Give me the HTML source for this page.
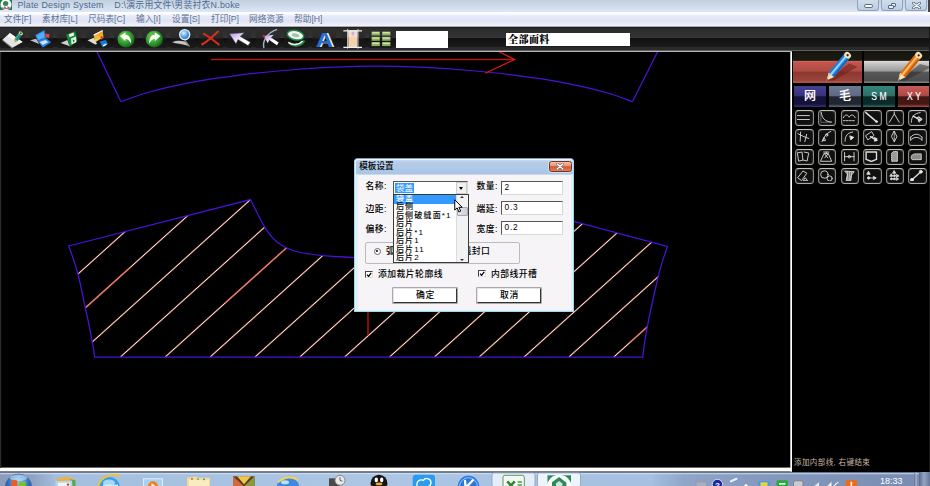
<!DOCTYPE html>
<html><head><meta charset="utf-8"><title>Plate Design System</title>
<style>
html,body{margin:0;padding:0;background:#000;}
#root{position:relative;width:930px;height:486px;overflow:hidden;background:#000;font-family:"Liberation Sans","Noto Sans CJK SC",sans-serif;}
#root div,#root span,#root svg{position:absolute;box-sizing:border-box;}
#titlebar{left:0;top:0;width:930px;height:12px;background:linear-gradient(#c3cfde 0%,#ccd9e9 40%,#d6e2f2 80%,#dde8f6 100%);}
#title{left:17.5px;top:-1px;font-size:8.9px;line-height:13px;color:#4d6a8c;white-space:nowrap;letter-spacing:.2px;}
#menubar{left:0;top:12px;width:930px;height:15px;background:linear-gradient(#fff 0%,#fdfdff 12%,#e8ecf9 26%,#dfe3f4 58%,#eaebf7 78%,#f2f2fa 91%,#b8b8c0 96%,#555 100%);}
  .mi{top:1px;font-size:8.7px;line-height:12px;color:#5d7395;white-space:nowrap;}
#toolbar{left:0;top:27px;width:930px;height:25.3px;background:linear-gradient(#202020 0%,#222 5%,#2c2c2c 7%,#333 41%,#3c3c3c 43%,#101010 46%,#1c1c1c 78%,#2a2a2a 81%,#2a2a2a 93%,#b0b0b0 95.5%,#b8b8b8 100%);}
.wb{top:0;height:11px;border:1px solid #8fa3bf;border-top:none;border-radius:0 0 3px 3px;background:linear-gradient(#cfdcec,#bccde2);}
#canvas{left:0;top:52px;width:793px;height:420px;background:#000;}
#panel{left:792px;top:51px;width:138px;height:421px;background:#000;}
#taskbar{left:0;top:471.7px;width:930px;height:15px;background:linear-gradient(90deg,#8a9cba 0%,#8fa2c2 3.5%,#a4bede 6%,#acc6e4 40%,#a5c0e0 70%,#8fa6c8 73.5%,#8499bd 82%,#788cb2 100%);}
.tab{top:35px;height:21px;color:#fff;font-size:12px;line-height:21px;text-align:center;font-weight:500;text-shadow:0 0 .8px #fff6;}
.ib{width:18.6px;height:16.3px;border:1.7px solid;border-color:#c4c0ba #8e8a84 #b0aca6 #8e8a84;border-radius:3.8px;background:#101010;box-shadow:inset 0 0 1.2px #fff9, 0 0 .8px #8888;}
#dlg{left:354px;top:157.6px;width:220.3px;height:154.4px;background:#e2f0f9;border:1px solid #9ed8ee;border-top-color:#7f9bb8;border-radius:4px 4px 1px 1px;}
#dlg .tbar{left:0;top:0;width:100%;height:15.2px;background:linear-gradient(#cfe0f4 0,#b6cde9 22%,#a9c5e5 100%);border-radius:3px 3px 0 0;box-shadow:inset 0 1px 0 #f0f7ff, inset 1px 0 0 #e4f0fa;}
#dlg .client{left:2.4px;top:15px;width:215px;height:137px;background:#f6f4f6;border:1px solid #e6eef5;border-top-color:#c9d9ea;}
.lbl{font-size:8.8px;line-height:11px;color:#000;white-space:nowrap;font-weight:500;letter-spacing:.5px;}
.inp{height:14px;width:62px;background:#fff;border:1px solid #d8d8d8;border-top-color:#555;border-left-color:#555;font-size:8.3px;line-height:11px;padding-left:2px;letter-spacing:.9px;color:#000;}
.btn{height:15px;width:64px;background:#fff;border:1px solid #333;border-top-color:#e4e4e4;border-left-color:#e4e4e4;box-shadow:0 0 0 .6px #777;font-size:8.8px;letter-spacing:.5px;line-height:12.5px;text-align:center;color:#000;font-weight:500;}
.li{left:0;width:64px;height:8.6px;font-size:8.1px;line-height:8.6px;color:#000;white-space:nowrap;padding-left:2px;font-weight:500;letter-spacing:1.1px;}
.cb{width:8px;height:7.6px;border:1px solid #e0e0e0;border-top-color:#444;border-left-color:#444;background:#fff;}
</style></head><body>
<div id="root">
  <div id="titlebar">
    <svg width="13" height="12" viewBox="0 0 13 12" style="left:0;top:0"><rect x="0" y="0" width="12" height="10" fill="#1f7c4c"/><circle cx="6" cy="4.6" r="5.5" fill="#fbfdfb"/><ellipse cx="5.6" cy="3.4" rx="2.7" ry="2.5" fill="#2c8a58"/><path d="M1.4 6.6 C3 8 4 8 5 6.6 C6 8.4 7.4 8.4 8.4 6.4 C9.4 8 10.4 7.4 11 6.2 L10 9 L2.4 9 Z" fill="#e0609a"/><path d="M4.6 6.4 L5.4 8.6 M7.8 6.4 L8.4 8.6" stroke="#2c8a58" stroke-width=".9"/></svg>
    <span id="title">Plate Design System&nbsp;&nbsp;&nbsp;&nbsp;D:\演示用文件\男装衬衣N.boke</span>
    <div class="wb" style="left:857px;width:22px"><div style="left:6.3px;top:4.3px;width:8.6px;height:3.8px;border:1px solid #5a6a80;border-radius:1.9px;background:#fff"></div></div>
    <div class="wb" style="left:881px;width:22px"><div style="left:8.5px;top:2.5px;width:5.5px;height:4.5px;border:1.3px solid #5a6a80;border-radius:1px;background:#e8eef6"></div><div style="left:6px;top:4.5px;width:5.5px;height:4.5px;border:1.3px solid #5a6a80;border-radius:1px;background:#e8eef6"></div></div>
    <div class="wb" style="left:905px;width:22px"><svg width="9" height="7" viewBox="0 0 9 7" style="left:5.8px;top:2.2px"><path d="M1.4 1.2 L7.6 5.8 M7.6 1.2 L1.4 5.8" stroke="#5a6a80" stroke-width="2.8" stroke-linecap="round"/><path d="M1.4 1.2 L7.6 5.8 M7.6 1.2 L1.4 5.8" stroke="#fff" stroke-width="1.3" stroke-linecap="round"/></svg></div>
    <div style="left:928px;top:0;width:2px;height:26px;background:#444"></div>
  </div>
  <div id="menubar">
    <span class="mi" style="left:4px">文件[F]</span>
    <span class="mi" style="left:42px">素材库[L]</span>
    <span class="mi" style="left:88px">尺码表[C]</span>
    <span class="mi" style="left:136px">输入[I]</span>
    <span class="mi" style="left:172px">设置[S]</span>
    <span class="mi" style="left:211px">打印[P]</span>
    <span class="mi" style="left:249px">网络资源</span>
    <span class="mi" style="left:294px">帮助[H]</span>
  </div>
  <div id="toolbar">

<svg width="400" height="25" viewBox="0 27 400 25" style="left:0;top:0">
<defs><linearGradient id="bb" x1="0" y1="0" x2="0" y2="1"><stop offset="0" stop-color="#2f2f2f"/><stop offset=".5" stop-color="#292929"/><stop offset=".52" stop-color="#151515"/><stop offset="1" stop-color="#1b1b1b"/></linearGradient><radialGradient id="gc" cx=".4" cy=".35" r=".7"><stop offset="0" stop-color="#7ad65a"/><stop offset=".6" stop-color="#2e9a2e"/><stop offset="1" stop-color="#145a14"/></radialGradient><linearGradient id="og" x1="0" y1="0" x2="0" y2="1"><stop offset="0" stop-color="#f08a18"/><stop offset="1" stop-color="#f8dc50"/></linearGradient><radialGradient id="lens" cx=".4" cy=".35" r=".7"><stop offset="0" stop-color="#e8f6ff"/><stop offset=".5" stop-color="#58a8ee"/><stop offset="1" stop-color="#1c64b8"/></radialGradient><linearGradient id="ag" x1="0" y1="0" x2="1" y2="1"><stop offset="0" stop-color="#b48ce8"/><stop offset=".6" stop-color="#fff"/></linearGradient></defs>
<rect x="0.7" y="28.5" width="24" height="19.5" fill="url(#bb)"/>
<g transform="translate(12.7 38.8) scale(1.1)"><path d="M-9.4 0.8 L-2.6 -5.2 L9 3 L-0.2 8.2 Z" fill="#e4e4e4"/><path d="M-9.4 0.8 L-0.2 8.2 L-0.2 9 L-9.4 1.6Z" fill="#9a9a9a"/><path d="M-4.6 -2 L-2.6 -5.2 L9 3 L6 4 Z" fill="#f8f8f8"/><g transform="translate(1.8 3.1) rotate(34.7)"><rect x="-1.7" y="-9.8" width="3.4" height="7.6" fill="#1f8a78"/><rect x="-1.7" y="-9.8" width="1.2" height="7.6" fill="#3ab0a0"/><path d="M-1.7 -2.3 L1.7 -2.3 L0 0.4 Z" fill="#f0a030"/><ellipse cx="0" cy="-9.9" rx="2" ry="1.5" fill="#f0d890"/><circle cx="0" cy="-9.9" r=".8" fill="#14483c"/></g></g>
<rect x="29.0" y="28.5" width="24" height="19.5" fill="url(#bb)"/>
<g transform="translate(41.0 38.8) scale(1.1)"><path d="M-9.9 1.4 L-4.5 0 L-3.1 2.05 L-1.7 4.8 Z" fill="#c0c0c0"/><path d="M-3.1 2.05 L4.4 -0.7 L9.2 3.1 L1.7 7.9 Z" fill="#2a86e4"/><path d="M-1.2 3 L4 1 L6.6 3.2 L1.6 5.6 Z" fill="#cfe4fa"/><path d="M-5.1 -3.4 L3.06 -7.9 L4.4 -0.7 L-3.1 2.05 Z" fill="#2a8cec"/><path d="M-3.9 -3 L2.3 -6.4 L3.3 -1.2 L-2.4 0.9 Z" fill="#58aef6"/><path d="M3.7 -4.8 L7.9 -4.1 L7.2 -0.7 L4.6 -1.2 Z" fill="#e04848"/></g>
<rect x="57.4" y="28.5" width="24" height="19.5" fill="url(#bb)"/>
<g transform="translate(69.4 38.8) scale(1.1)"><path d="M-8 3.8 L-1.9 1 L0.5 6.8 Z" fill="#cfcfcf"/><path d="M-2.9 -3.8 L5.3 -6.8 L7.3 2.05 L0.16 7.5 Z" fill="#168a3a"/><path d="M-0.5 -4.1 L3.9 -5.8 L4.3 -3.1 L0.16 -1.4 Z" fill="#eef6ee"/><path d="M1.5 -0.3 L6 -2.05 L6.3 3.1 L1.9 5.1 Z" fill="#e4f0e4"/><path d="M3 0.6 L5 1.6 L3.4 3.6 Z" fill="#168a3a"/></g>
<rect x="85.7" y="28.5" width="24" height="19.5" fill="url(#bb)"/>
<g transform="translate(97.7 38.8) scale(1.1)"><path d="M-9.2 1.4 L-3.4 -1 L-0.6 4.8 L-2.3 5.1 Z" fill="#dcdcdc"/><path d="M-3.7 -3.8 L4.5 -7.9 L5.2 -1.4 L-2.3 3.1 Z" fill="url(#og)"/><path d="M-3.7 -3.8 L4.5 -7.9 L4.6 -6.9 L-3.5 -2.8 Z" fill="#f4f4f4"/><path d="M2.5 -2.7 L5.9 -1.4 L3.1 1 Z" fill="#d0482c"/><path d="M1.8 2.4 L7.25 1 L9.3 4.8 L4.5 7.9 Z" fill="#1c78dc"/><path d="M4.6 5.6 L7.6 4.2 L8.2 5.4 L5.4 7 Z" fill="#eaf4ff"/></g>
<rect x="114.0" y="28.5" width="24" height="19.5" fill="url(#bb)"/>
<g transform="translate(126.0 38.8) scale(1.1)"><circle cx="0" cy="0.3" r="7.7" fill="url(#gc)"/><path d="M-5.5 -2.5 L-0.5 -6 L-0.5 -3.6 C3 -3.4 5 0 4.6 4.6 C3.4 1.6 1.6 0.2 -0.5 0.2 L-0.5 2.2 Z" fill="#fff" opacity=".95"/></g>
<rect x="142.3" y="28.5" width="24" height="19.5" fill="url(#bb)"/>
<g transform="translate(154.3 38.8) scale(1.1)"><circle cx="0" cy="0.3" r="7.7" fill="url(#gc)"/><path d="M5.5 -2.5 L0.5 -6 L0.5 -3.6 C-3 -3.4 -5 0 -4.6 4.6 C-3.4 1.6 -1.6 0.2 0.5 0.2 L0.5 2.2 Z" fill="#fff" opacity=".95"/></g>
<rect x="170.7" y="28.5" width="24" height="19.5" fill="url(#bb)"/>
<g transform="translate(182.7 38.8) scale(1.1)"><path d="M-9.5 3.2 C-5 1.2 1 1.6 3.5 3.6 L6.5 7 L4 6.2 C-1 4.6 -6 4.6 -9.5 3.2 Z" fill="#c4c4c4"/><path d="M1.5 0.5 L6 6.8" stroke="#888" stroke-width="1.2"/><circle cx="1.8" cy="-3.8" r="4.6" fill="url(#lens)" stroke="#e4e8ee" stroke-width="1.2"/></g>
<rect x="199.0" y="28.5" width="24" height="19.5" fill="url(#bb)"/>
<g transform="translate(211.0 38.8) scale(1.1)"><path d="M-6.5 -4.5 C-3 -3 2 1 7 5.2" stroke="#d8301c" stroke-width="1.9" fill="none" stroke-linecap="round"/><path d="M6.4 -6.6 C2 -3 -3 2.5 -8 5" stroke="#d8301c" stroke-width="1.9" fill="none" stroke-linecap="round"/></g>
<rect x="227.3" y="28.5" width="24" height="19.5" fill="url(#bb)"/>
<g transform="translate(239.3 38.8) scale(1.1)"><path d="M-9 -4.6 L4.5 -5.6 L0.8 -2.2 L10 3.2 L8 6.2 L-1.2 0.6 L-3 4.6 Z" fill="url(#ag)" stroke="#444" stroke-width=".4"/></g>
<rect x="255.7" y="28.5" width="24" height="19.5" fill="url(#bb)"/>
<g transform="translate(267.7 38.8) scale(1.1)"><path d="M8.5 -8.5 C-1 -5 -5 2 -3.5 8.5" stroke="#9fb0c0" stroke-width="1.3" fill="none"/><path d="M-3.5 -2.6 L5.5 -3.6 L3 -1.2 L10 3.4 L8.4 5.8 L1.4 1.2 L0 4 Z" fill="url(#ag)"/><circle cx="-3.5" cy="-2.6" r="1.1" fill="#e82020"/></g>
<rect x="284.0" y="28.5" width="24" height="19.5" fill="url(#bb)"/>
<g transform="translate(296.0 38.8) scale(1.1)"><ellipse cx="-0.5" cy="-3.2" rx="7.6" ry="4.2" fill="#f4f4f4" stroke="#1f8a48" stroke-width="1.3" transform="rotate(12 0 -3)"/><ellipse cx="-0.5" cy="-3.2" rx="3.4" ry="1.6" fill="#9cc8a8" transform="rotate(12 0 -3)"/><path d="M-6 4 C-2 7.5 5 6.5 7.5 1.5" stroke="#1f8a48" stroke-width="2.2" fill="none"/><path d="M-7 3.2 C-3 6.2 3 5.6 6 2" stroke="#f4f4f4" stroke-width="1.4" fill="none"/></g>
<rect x="312.3" y="28.5" width="24" height="19.5" fill="url(#bb)"/>
<g transform="translate(324.3 38.8) scale(1.1)"><g transform="scale(1.18 1)"><text x="1.4" y="7.2" font-family="Liberation Sans,sans-serif" font-weight="bold" font-size="18.5" text-anchor="middle" fill="#e8f0fa">A</text><text x="0" y="7" font-family="Liberation Sans,sans-serif" font-weight="bold" font-size="18.5" text-anchor="middle" fill="#2a6ccc">A</text></g></g>
<rect x="340.7" y="28.5" width="24" height="19.5" fill="url(#bb)"/>
<g transform="translate(352.7 38.8) scale(1.1)"><rect x="-4" y="-7.5" width="8.2" height="15.5" fill="#f6d2aa"/><rect x="-4" y="-7.5" width="8.2" height="6" fill="#f4dcc8"/><path d="M-8.5 -7.2 L8.5 -7.2 M-8.5 7.8 L8.5 7.8" stroke="#f4f4f4" stroke-width="1.2"/><path d="M-4.6 -9 L-4.6 9 M4.8 -9 L4.8 9" stroke="#e8e0e8" stroke-width=".8"/><path d="M-1 -6.5 L1.5 -6.5 L1 -3 L-0.8 -3Z" fill="#c8b4d8"/></g>
<rect x="369.0" y="28.5" width="24" height="19.5" fill="url(#bb)"/>
<g transform="translate(381.0 38.8) scale(1.1)"><rect x="-8.6" y="-6.6" width="7.6" height="3.6" fill="#8cb060"/><rect x="-8.0" y="-6.1" width="6.4" height="1.2" fill="#d4e8b0"/><rect x="-8.6" y="-1.8" width="7.6" height="3.6" fill="#8cb060"/><rect x="-8.0" y="-1.3" width="6.4" height="1.2" fill="#d4e8b0"/><rect x="-8.6" y="3" width="7.6" height="3.6" fill="#8cb060"/><rect x="-8.0" y="3.5" width="6.4" height="1.2" fill="#d4e8b0"/><rect x="1" y="-6.6" width="7.6" height="3.6" fill="#8cb060"/><rect x="1.6" y="-6.1" width="6.4" height="1.2" fill="#d4e8b0"/><rect x="1" y="-1.8" width="7.6" height="3.6" fill="#8cb060"/><rect x="1.6" y="-1.3" width="6.4" height="1.2" fill="#d4e8b0"/><rect x="1" y="3" width="7.6" height="3.6" fill="#8cb060"/><rect x="1.6" y="3.5" width="6.4" height="1.2" fill="#d4e8b0"/></g>
</svg>
    <div style="left:395.5px;top:3.6px;width:52.5px;height:17.2px;background:#fff"></div>
    <div style="left:505.7px;top:5.7px;width:124.8px;height:13.5px;background:#fff;font-family:'Liberation Serif','Noto Serif CJK SC',serif;font-weight:900;font-size:10px;line-height:14.6px;letter-spacing:.4px;padding-left:2.4px;color:#000;overflow:hidden">全部面料</div>
  </div>

<div id="canvas"><svg width="793" height="420" viewBox="0 52 793 420" style="left:0;top:0">
<defs><clipPath id="pc"><path d="M68.8 246 L250.4 199.6 C258 214 262 224 268 232 C276 243 284 248 296 251.5 C312 255.5 332 257 368 258 L450 254 L574 221.5 L667.5 246.5 C662 262 660 268 658 277.4 C654 295 650 312 647.3 327 C645.4 336 644 346 642.8 357 L94.6 357 C94 350 93 346 92 341 C90 330 88 318 85 307 C83 297 81 286 78 274 C75 263 72 255 68.8 246 Z"/></clipPath></defs>
<g clip-path="url(#pc)" fill="none">
<line x1="-14.2" y1="357" x2="185.8" y2="177.0" stroke="#e8705c" stroke-width="1.8" opacity=".5"/>
<line x1="-14.2" y1="357" x2="185.8" y2="177.0" stroke="#fff0e8" stroke-width="1"/>
<line x1="30.7" y1="357" x2="230.7" y2="177.0" stroke="#e8705c" stroke-width="1.8" opacity=".5"/>
<line x1="30.7" y1="357" x2="230.7" y2="177.0" stroke="#fff0e8" stroke-width="1"/>
<line x1="75.6" y1="357" x2="275.6" y2="177.0" stroke="#e8705c" stroke-width="1.8" opacity=".5"/>
<line x1="75.6" y1="357" x2="275.6" y2="177.0" stroke="#fff0e8" stroke-width="1"/>
<line x1="120.4" y1="357" x2="320.4" y2="177.0" stroke="#e8705c" stroke-width="1.8" opacity=".5"/>
<line x1="120.4" y1="357" x2="320.4" y2="177.0" stroke="#fff0e8" stroke-width="1"/>
<line x1="165.2" y1="357" x2="365.2" y2="177.0" stroke="#e8705c" stroke-width="1.8" opacity=".5"/>
<line x1="165.2" y1="357" x2="365.2" y2="177.0" stroke="#fff0e8" stroke-width="1"/>
<line x1="210.1" y1="357" x2="410.1" y2="177.0" stroke="#e8705c" stroke-width="1.8" opacity=".5"/>
<line x1="210.1" y1="357" x2="410.1" y2="177.0" stroke="#fff0e8" stroke-width="1"/>
<line x1="255.0" y1="357" x2="455.0" y2="177.0" stroke="#e8705c" stroke-width="1.8" opacity=".5"/>
<line x1="255.0" y1="357" x2="455.0" y2="177.0" stroke="#fff0e8" stroke-width="1"/>
<line x1="299.8" y1="357" x2="499.8" y2="177.0" stroke="#e8705c" stroke-width="1.8" opacity=".5"/>
<line x1="299.8" y1="357" x2="499.8" y2="177.0" stroke="#fff0e8" stroke-width="1"/>
<line x1="344.6" y1="357" x2="544.6" y2="177.0" stroke="#e8705c" stroke-width="1.8" opacity=".5"/>
<line x1="344.6" y1="357" x2="544.6" y2="177.0" stroke="#fff0e8" stroke-width="1"/>
<line x1="389.5" y1="357" x2="589.5" y2="177.0" stroke="#e8705c" stroke-width="1.8" opacity=".5"/>
<line x1="389.5" y1="357" x2="589.5" y2="177.0" stroke="#fff0e8" stroke-width="1"/>
<line x1="434.4" y1="357" x2="634.4" y2="177.0" stroke="#e8705c" stroke-width="1.8" opacity=".5"/>
<line x1="434.4" y1="357" x2="634.4" y2="177.0" stroke="#fff0e8" stroke-width="1"/>
<line x1="479.2" y1="357" x2="679.2" y2="177.0" stroke="#e8705c" stroke-width="1.8" opacity=".5"/>
<line x1="479.2" y1="357" x2="679.2" y2="177.0" stroke="#fff0e8" stroke-width="1"/>
<line x1="524.1" y1="357" x2="724.1" y2="177.0" stroke="#e8705c" stroke-width="1.8" opacity=".5"/>
<line x1="524.1" y1="357" x2="724.1" y2="177.0" stroke="#fff0e8" stroke-width="1"/>
<line x1="568.9" y1="357" x2="768.9" y2="177.0" stroke="#e8705c" stroke-width="1.8" opacity=".5"/>
<line x1="568.9" y1="357" x2="768.9" y2="177.0" stroke="#fff0e8" stroke-width="1"/>
<line x1="613.8" y1="357" x2="813.8" y2="177.0" stroke="#e8705c" stroke-width="1.8" opacity=".5"/>
<line x1="613.8" y1="357" x2="813.8" y2="177.0" stroke="#fff0e8" stroke-width="1"/>
<line x1="80.7" y1="312.0" x2="130.7" y2="267.0" stroke="#e4705a" stroke-width="1.1"/>
<line x1="225.2" y1="303.0" x2="289.2" y2="245.4" stroke="#e4705a" stroke-width="1.1"/>
<line x1="629.8" y1="342.6" x2="653.8" y2="321.0" stroke="#e4705a" stroke-width="1.1"/>
</g>
<g stroke="#4a12d8" stroke-width="1.25" fill="none">
<path d="M96.6 51 L121 101.7"/><path d="M121.0 101.7 C125.5 100.2 135.8 95.8 147.7 92.5 C159.6 89.2 177.7 85.1 192.7 82.2 C207.7 79.3 222.5 77.2 237.7 75.3 C252.9 73.3 268.5 71.8 283.7 70.5 C298.9 69.2 313.2 68.2 328.7 67.4 C344.2 66.7 360.7 66.0 376.7 66.0 C392.7 66.0 409.2 66.7 424.7 67.4 C440.2 68.2 454.5 69.2 469.7 70.5 C484.9 71.8 500.5 73.3 515.7 75.3 C530.9 77.2 545.7 79.3 560.7 82.2 C575.7 85.1 593.8 89.2 605.7 92.5 C617.7 95.8 628.0 100.2 632.4 101.7"/><path d="M632.4 101.7 L658 51"/>
<path d="M68.8 246 L250.4 199.6 C258 214 262 224 268 232 C276 243 284 248 296 251.5 C312 255.5 332 257 368 258 L450 254 L574 221.5 L667.5 246.5 C662 262 660 268 658 277.4 C654 295 650 312 647.3 327 C645.4 336 644 346 642.8 357 L94.6 357 C94 350 93 346 92 341 C90 330 88 318 85 307 C83 297 81 286 78 274 C75 263 72 255 68.8 246 Z"/>
</g>
<g stroke="#b4180c" stroke-width="1.3" fill="none"><path d="M211 59.5 L514.5 59.5"/><path d="M499.2 51.8 L514.5 59.5 L485.2 73.2" stroke="#e21c0e" stroke-width="1.2"/><path d="M368 310 L368 335.5" stroke="#cc140c"/></g>
<rect x="0" y="467.6" width="792.2" height="3.9" fill="#fff"/><rect x="0" y="52" width="1.2" height="416" fill="#2a2a2a"/>
<rect x="790.3" y="52" width="1.9" height="419.5" fill="#fff"/>
</svg></div>
<div style="left:928.6px;top:27px;width:1.4px;height:445px;background:#161616;z-index:5"></div>
<div id="panel">
<div style="left:.5px;top:0;width:69.5px;height:32px;background:linear-gradient(#15150e 0,#1b1b12 29.5%,#d46c64 31%,#c0564e 36%,#b04c44 63%,#8a3830 65.5%,#9c443b 93%,#b85e56 98%,#762e26 100%)"></div>
<div style="left:72px;top:0;width:66px;height:32px;background:linear-gradient(#15150e 0,#1b1b12 29.5%,#e0e0e0 31%,#c4c4c4 40%,#9a9a9a 63%,#585858 65.5%,#4c4c4c 93%,#8a8a8a 98%,#444 100%)"></div>
<svg width="138" height="40" viewBox="0 0 138 40" style="left:0;top:0;overflow:visible">
<polygon points="35.0,29.6 57.0,12.5 65.6,15.8 42.0,29.4" fill="rgba(110,28,22,.55)"/>
<g transform="translate(34.7 29.4) rotate(39.7)">
<rect x="-3.4" y="-32.73912033027154" width="6.8" height="25.73912033027154" fill="#2a94ea"/>
<rect x="-3.4" y="-32.73912033027154" width="1.6" height="25.73912033027154" fill="#1466bc" opacity=".55"/>
<rect x="-1.4" y="-32.73912033027154" width="1.7" height="25.73912033027154" fill="#9cd4ff"/>
<rect x="1.5999999999999999" y="-32.73912033027154" width="1.8" height="25.73912033027154" fill="#1466bc"/>
<ellipse cx="0" cy="-32.73912033027154" rx="3.6" ry="3" fill="#f4e0b4"/>
<circle cx="0" cy="-32.73912033027154" r="1.1" fill="#2a1a14"/>
<path d="M-3.4 -7.2 L3.4 -7.2 L0 0 Z" fill="#f6e4c0"/>
<path d="M-3.4 -7.2 L-1 -7.2 L0 0 Z" fill="#e8c890"/>
<path d="M-.9 -2 L.9 -2 L0 0 Z" fill="#776"/>
</g></svg>
<svg width="138" height="40" viewBox="0 0 138 40" style="left:0;top:0;overflow:visible">
<polygon points="106.4,30.0 128.0,13.0 137.5,15.5 137.5,17.0 113.0,29.8" fill="rgba(40,40,40,.5)"/>
<g transform="translate(106.2 29.8) rotate(38.8)">
<rect x="-3.4" y="-32.71849629796577" width="6.8" height="25.71849629796577" fill="#f58220"/>
<rect x="-3.4" y="-32.71849629796577" width="1.6" height="25.71849629796577" fill="#c85e0a" opacity=".55"/>
<rect x="-1.4" y="-32.71849629796577" width="1.7" height="25.71849629796577" fill="#ffc078"/>
<rect x="1.5999999999999999" y="-32.71849629796577" width="1.8" height="25.71849629796577" fill="#c85e0a"/>
<ellipse cx="0" cy="-32.71849629796577" rx="3.6" ry="3" fill="#f4e0b4"/>
<circle cx="0" cy="-32.71849629796577" r="1.1" fill="#2a1a14"/>
<path d="M-3.4 -7.2 L3.4 -7.2 L0 0 Z" fill="#f6e4c0"/>
<path d="M-3.4 -7.2 L-1 -7.2 L0 0 Z" fill="#e8c890"/>
<path d="M-.9 -2 L.9 -2 L0 0 Z" fill="#776"/>
</g></svg>
<div class="tab" style="left:1.6px;width:32.6px;background:linear-gradient(#464094 0,#38327c 45%,#15123a 52%,#15123a 86%,#38327c 100%)">网</div>
<div class="tab" style="left:36.6px;width:32.6px;background:linear-gradient(#6e7a94 0,#5e6a82 45%,#22262f 52%,#22262f 86%,#5e6a82 100%)">毛</div>
<div class="tab" style="left:71px;width:32.2px;background:linear-gradient(#35857d 0,#2a726b 45%,#0c2a28 52%,#0c2a28 86%,#2a726b 100%)"><span style="position:static;display:inline-block;transform:scaleX(.78);letter-spacing:3.2px;font-size:11px;padding-left:3px">SM</span></div>
<div class="tab" style="left:105.8px;width:32.2px;background:linear-gradient(#c45c58 0,#b04a46 45%,#441614 52%,#441614 86%,#b04a46 100%)"><span style="position:static;display:inline-block;transform:scaleX(.78);letter-spacing:3.2px;font-size:11px;padding-left:3px">XY</span></div>
<div class="ib" style="left:3.4px;top:59.0px"><svg width="14.6" height="12.3" viewBox="0 0 15.4 13.0" style="left:0;top:0"><g stroke="#dedede" stroke-width=".78" fill="none" stroke-linecap="round" stroke-linejoin="round" transform="translate(7.7 6.8) scale(1.22) translate(-7.7 -6.8)"><path d="M2.6 5.2 L13 5.2 M2.6 8.6 L13 8.6"/></g></svg></div>
<div class="ib" style="left:25.9px;top:59.0px"><svg width="14.6" height="12.3" viewBox="0 0 15.4 13.0" style="left:0;top:0"><g stroke="#dedede" stroke-width=".78" fill="none" stroke-linecap="round" stroke-linejoin="round" transform="translate(7.7 6.8) scale(1.22) translate(-7.7 -6.8)"><path d="M3.4 2.6 C3.8 7.5 6.5 10.4 12 10.8" /><path d="M3 2.4 L3 11 L12.4 11" stroke-width=".5" opacity=".7"/></g></svg></div>
<div class="ib" style="left:48.5px;top:59.0px"><svg width="14.6" height="12.3" viewBox="0 0 15.4 13.0" style="left:0;top:0"><g stroke="#dedede" stroke-width=".78" fill="none" stroke-linecap="round" stroke-linejoin="round" transform="translate(7.7 6.8) scale(1.22) translate(-7.7 -6.8)"><path d="M2.6 7 C4 4 6 4 7.6 6.6 C9 4 11.5 4 12.8 7"/><path d="M2.6 9.6 L12.8 9.6" stroke-dasharray="1.6 1"/></g></svg></div>
<div class="ib" style="left:71.1px;top:59.0px"><svg width="14.6" height="12.3" viewBox="0 0 15.4 13.0" style="left:0;top:0"><g stroke="#dedede" stroke-width=".78" fill="none" stroke-linecap="round" stroke-linejoin="round" transform="translate(7.7 6.8) scale(1.22) translate(-7.7 -6.8)"><path d="M3 2.6 L12.4 10.6" stroke-width="1.3"/><circle cx="12.2" cy="10.4" r=".9"/></g></svg></div>
<div class="ib" style="left:93.6px;top:59.0px"><svg width="14.6" height="12.3" viewBox="0 0 15.4 13.0" style="left:0;top:0"><g stroke="#dedede" stroke-width=".78" fill="none" stroke-linecap="round" stroke-linejoin="round" transform="translate(7.7 6.8) scale(1.22) translate(-7.7 -6.8)"><path d="M7.7 2 L7.7 3.8 L3.4 11 M7.7 3.8 L12 11"/></g></svg></div>
<div class="ib" style="left:116.2px;top:59.0px"><svg width="14.6" height="12.3" viewBox="0 0 15.4 13.0" style="left:0;top:0"><g stroke="#dedede" stroke-width=".78" fill="none" stroke-linecap="round" stroke-linejoin="round" transform="translate(7.7 6.8) scale(1.22) translate(-7.7 -6.8)"><path d="M3.4 11 C3.4 6 6 3.4 11 2.6"/><path d="M5 5.6 L11.6 9.4 M8.8 7 L10.2 10.6 M9.8 6.4 L12.4 8.4" stroke-width="1.2"/></g></svg></div>
<div class="ib" style="left:3.4px;top:78.4px"><svg width="14.6" height="12.3" viewBox="0 0 15.4 13.0" style="left:0;top:0"><g stroke="#dedede" stroke-width=".78" fill="none" stroke-linecap="round" stroke-linejoin="round" transform="translate(7.7 6.8) scale(1.22) translate(-7.7 -6.8)"><path d="M3 4.4 C6 6 9 7.6 12.4 8.6 M5.4 3 L5 11 M10.6 5 L9 11.4"/></g></svg></div>
<div class="ib" style="left:25.9px;top:78.4px"><svg width="14.6" height="12.3" viewBox="0 0 15.4 13.0" style="left:0;top:0"><g stroke="#dedede" stroke-width=".78" fill="none" stroke-linecap="round" stroke-linejoin="round" transform="translate(7.7 6.8) scale(1.22) translate(-7.7 -6.8)"><path d="M11.6 2.4 C8 4 5.4 7 4 11.4" /><circle cx="8" cy="5.6" r="1"/><path d="M6 8 L7 10.4 L5 10.4Z" stroke-width=".8"/></g></svg></div>
<div class="ib" style="left:48.5px;top:78.4px"><svg width="14.6" height="12.3" viewBox="0 0 15.4 13.0" style="left:0;top:0"><g stroke="#dedede" stroke-width=".78" fill="none" stroke-linecap="round" stroke-linejoin="round" transform="translate(7.7 6.8) scale(1.22) translate(-7.7 -6.8)"><path d="M4 11 C4 6 6.4 3.6 10.6 3"/><path d="M8.4 6.4 L11.6 7.6 L9.2 9.6 Z" fill="#f2f2f2"/></g></svg></div>
<div class="ib" style="left:71.1px;top:78.4px"><svg width="14.6" height="12.3" viewBox="0 0 15.4 13.0" style="left:0;top:0"><g stroke="#dedede" stroke-width=".78" fill="none" stroke-linecap="round" stroke-linejoin="round" transform="translate(7.7 6.8) scale(1.22) translate(-7.7 -6.8)"><path d="M3 6 L8 2.6 L10 6 L5 9.6 Z"/><path d="M7 7 L12 10 M10.4 8 L12.4 9 M10.6 10.6 L12.6 10.2" stroke-width="1.3"/></g></svg></div>
<div class="ib" style="left:93.6px;top:78.4px"><svg width="14.6" height="12.3" viewBox="0 0 15.4 13.0" style="left:0;top:0"><g stroke="#dedede" stroke-width=".78" fill="none" stroke-linecap="round" stroke-linejoin="round" transform="translate(7.7 6.8) scale(1.22) translate(-7.7 -6.8)"><path d="M7.7 2.4 L10 7 L7.7 11.4 L5.4 7 Z"/><path d="M7.7 2.4 L7.7 11.4" stroke-width=".6"/></g></svg></div>
<div class="ib" style="left:116.2px;top:78.4px"><svg width="14.6" height="12.3" viewBox="0 0 15.4 13.0" style="left:0;top:0"><g stroke="#dedede" stroke-width=".78" fill="none" stroke-linecap="round" stroke-linejoin="round" transform="translate(7.7 6.8) scale(1.22) translate(-7.7 -6.8)"><path d="M2.8 7.4 C5.6 4 9.8 4 12.6 7.4 M2.8 10 C5.6 6.8 9.8 6.8 12.6 10 M2.8 7.4 L2.8 10 M12.6 7.4 L12.6 10"/></g></svg></div>
<div class="ib" style="left:3.4px;top:97.8px"><svg width="14.6" height="12.3" viewBox="0 0 15.4 13.0" style="left:0;top:0"><g stroke="#dedede" stroke-width=".78" fill="none" stroke-linecap="round" stroke-linejoin="round" transform="translate(7.7 6.8) scale(1.22) translate(-7.7 -6.8)"><path d="M2.8 3.6 L6.6 3 L7.4 10 L4 10.8 Z M8.4 3 L12.4 3.8 L11 10.8 L7.8 10"/></g></svg></div>
<div class="ib" style="left:25.9px;top:97.8px"><svg width="14.6" height="12.3" viewBox="0 0 15.4 13.0" style="left:0;top:0"><g stroke="#dedede" stroke-width=".78" fill="none" stroke-linecap="round" stroke-linejoin="round" transform="translate(7.7 6.8) scale(1.22) translate(-7.7 -6.8)"><path d="M6 4.4 L9.4 4.4 L12.4 11 L3 11 Z M5.4 3 L10 3 M7.7 3 L7.7 4.4 M6 4.4 L9 8 M9.4 4.4 L6.4 8"/></g></svg></div>
<div class="ib" style="left:48.5px;top:97.8px"><svg width="14.6" height="12.3" viewBox="0 0 15.4 13.0" style="left:0;top:0"><g stroke="#dedede" stroke-width=".78" fill="none" stroke-linecap="round" stroke-linejoin="round" transform="translate(7.7 6.8) scale(1.22) translate(-7.7 -6.8)"><path d="M3.6 3.4 L3.6 10.6 M11.8 3.4 L11.8 10.6 M3.6 7 L11.8 7"/><circle cx="7.7" cy="7" r="1.1"/></g></svg></div>
<div class="ib" style="left:71.1px;top:97.8px"><svg width="14.6" height="12.3" viewBox="0 0 15.4 13.0" style="left:0;top:0"><g stroke="#dedede" stroke-width=".78" fill="none" stroke-linecap="round" stroke-linejoin="round" transform="translate(7.7 6.8) scale(1.22) translate(-7.7 -6.8)"><path d="M3.2 3 L12.2 3 L12.2 9.4 L7.7 11.2 L3.2 9.4 Z" stroke-width="1.2"/></g></svg></div>
<div class="ib" style="left:93.6px;top:97.8px"><svg width="14.6" height="12.3" viewBox="0 0 15.4 13.0" style="left:0;top:0"><g stroke="#dedede" stroke-width=".78" fill="none" stroke-linecap="round" stroke-linejoin="round" transform="translate(7.7 6.8) scale(1.22) translate(-7.7 -6.8)"><path d="M5.4 4 L7 2.6 L10.4 2.6 L10.4 11 L5.4 11 Z" fill="#9a9a9a" stroke-dasharray="1 .8"/></g></svg></div>
<div class="ib" style="left:116.2px;top:97.8px"><svg width="14.6" height="12.3" viewBox="0 0 15.4 13.0" style="left:0;top:0"><g stroke="#dedede" stroke-width=".78" fill="none" stroke-linecap="round" stroke-linejoin="round" transform="translate(7.7 6.8) scale(1.22) translate(-7.7 -6.8)"><path d="M3.6 6 L6 4.6 L12 4.6 L12 9.6 L4 9.6 L3.2 8 Z" fill="#8a8a8a" stroke-dasharray="1 .8"/></g></svg></div>
<div class="ib" style="left:3.4px;top:117.2px"><svg width="14.6" height="12.3" viewBox="0 0 15.4 13.0" style="left:0;top:0"><g stroke="#dedede" stroke-width=".78" fill="none" stroke-linecap="round" stroke-linejoin="round" transform="translate(7.7 6.8) scale(1.22) translate(-7.7 -6.8)"><path d="M3 8.6 L7.4 3 L10.8 4.8 L6.4 11 Z"/><path d="M9.6 9 L11.4 11.4 L8 11.4 Z" stroke-width=".8"/></g></svg></div>
<div class="ib" style="left:25.9px;top:117.2px"><svg width="14.6" height="12.3" viewBox="0 0 15.4 13.0" style="left:0;top:0"><g stroke="#dedede" stroke-width=".78" fill="none" stroke-linecap="round" stroke-linejoin="round" transform="translate(7.7 6.8) scale(1.22) translate(-7.7 -6.8)"><circle cx="6" cy="6" r="3.2"/><circle cx="10.6" cy="9.4" r="2.2"/></g></svg></div>
<div class="ib" style="left:48.5px;top:117.2px"><svg width="14.6" height="12.3" viewBox="0 0 15.4 13.0" style="left:0;top:0"><g stroke="#dedede" stroke-width=".78" fill="none" stroke-linecap="round" stroke-linejoin="round" transform="translate(7.7 6.8) scale(1.22) translate(-7.7 -6.8)"><path d="M4 3 L12 3.6 L9.6 6.4 L9 11.4 L5 11.4 L6 6 Z" fill="#777"/><path d="M6 3.4 L6.4 11 M8 3.6 L7.6 11 M10 3.8 L8.6 11" stroke-width=".6"/></g></svg></div>
<div class="ib" style="left:71.1px;top:117.2px"><svg width="14.6" height="12.3" viewBox="0 0 15.4 13.0" style="left:0;top:0"><g stroke="#dedede" stroke-width=".78" fill="none" stroke-linecap="round" stroke-linejoin="round" transform="translate(7.7 6.8) scale(1.22) translate(-7.7 -6.8)"><path d="M5.4 3.4 L6.7 5.8 L4.1 5.8 Z" fill="#e8e8e8"/><circle cx="5.4" cy="9" r="1" fill="#e8e8e8"/><path d="M7 9 L9.6 9" stroke-dasharray=".9 .8"/><path d="M9.8 7.8 L12 9 L9.8 10.2 Z" fill="#e8e8e8"/></g></svg></div>
<div class="ib" style="left:93.6px;top:117.2px"><svg width="14.6" height="12.3" viewBox="0 0 15.4 13.0" style="left:0;top:0"><g stroke="#dedede" stroke-width=".78" fill="none" stroke-linecap="round" stroke-linejoin="round" transform="translate(7.7 6.8) scale(1.22) translate(-7.7 -6.8)"><path d="M7.7 2.8 L8.9 4.9 L6.500 4.9 Z M5.200 5.600 L6.300 7.500 L4.100 7.500 Z" fill="#e8e8e8"/><circle cx="7.7" cy="7" r=".8" fill="#e8e8e8"/><circle cx="5.200" cy="9.800" r=".8" fill="#e8e8e8"/><circle cx="7.7" cy="9.800" r=".8" fill="#e8e8e8"/><path d="M9.600 6 L11.800 7.200 L9.600 8.400 Z M9.600 8.900 L11.400 9.900 L9.600 10.900Z" fill="#e8e8e8"/></g></svg></div>
<div class="ib" style="left:116.2px;top:117.2px"><svg width="14.6" height="12.3" viewBox="0 0 15.4 13.0" style="left:0;top:0"><g stroke="#dedede" stroke-width=".78" fill="none" stroke-linecap="round" stroke-linejoin="round" transform="translate(7.7 6.8) scale(1.22) translate(-7.7 -6.8)"><path d="M4.2 10.4 L11.4 3.8" stroke-width="1.2"/><circle cx="4" cy="10.6" r="1.3" fill="#f2f2f2"/><circle cx="11.6" cy="3.6" r="1.3" fill="#f2f2f2"/></g></svg></div>
<span style="left:2px;top:406.6px;font-size:7.5px;line-height:10px;color:#cdb9a4;white-space:nowrap;letter-spacing:.42px">添加内部线, 右键结束</span>
</div>
<div id="taskbar">
<svg width="930" height="15" viewBox="0 471.7 930 15" style="left:0;top:0">
<defs><radialGradient id="orb" cx=".5" cy=".3" r=".8"><stop offset="0" stop-color="#9ad0f8"/><stop offset=".5" stop-color="#2a6cc0"/><stop offset="1" stop-color="#123a78"/></radialGradient></defs>
<rect x="0" y="471.7" width="930" height=".8" fill="#56657e"/><rect x="0" y="472.6" width="930" height="1.4" fill="#dce8f6" opacity=".6"/>
<rect x="492" y="472.6" width="43" height="14" rx="2" fill="#e4eef8" stroke="#8aa0bc" stroke-width=".8"/>
<rect x="537.5" y="472.6" width="43" height="14" rx="2" fill="#eef4fb" stroke="#8aa0bc" stroke-width=".8"/>
<circle cx="18.5" cy="487" r="13.2" fill="url(#orb)" stroke="#4a6a98" stroke-width="1"/>
<ellipse cx="18.5" cy="477.5" rx="9" ry="3.2" fill="#cfe6fa" opacity=".55"/>
<path d="M11.5 481 C13.2 479.3 15.8 479.3 17.6 480.6 L17.2 486 L10.8 486Z" fill="#ee5a24"/><path d="M19 480.8 C21 482 23.4 482 25.6 480.6 L25.8 486 L18.8 486 Z" fill="#7cc030"/>
<path d="M56.500 478.500 L66 476.400 L74.500 478.800 L74.500 486.500 L56.500 486.500Z" fill="#f0b040"/><path d="M70 479 L75.500 480 L75.500 486.500 L70 486.500Z" fill="#58a848"/><path d="M55.500 481 L72 480.300 L72.500 486.500 L55.500 486.500Z" fill="#b4d6f4"/><rect x="58" y="482.500" width="12" height="4" fill="#eef6fc"/><circle cx="68" cy="484.300" r="1.200" fill="#c8382a"/>
<circle cx="109.500" cy="487" r="10.300" fill="#3a9eec"/><ellipse cx="109" cy="482.500" rx="6" ry="3.200" fill="#a4d8fa"/><rect x="103" y="484.300" width="15" height="2.200" fill="#e8f4fc" opacity=".85"/><path d="M98.500 485 C101 477 111 472.500 119.500 475.600" stroke="#f4c428" stroke-width="1.900" fill="none" stroke-linecap="round"/>
<rect x="143.5" y="478.5" width="19" height="8" fill="#a8d0f0" stroke="#e0ecf8" stroke-width="1"/><circle cx="153" cy="486" r="5" fill="#f08020"/><path d="M151.5 483 L156 486 L151.5 489Z" fill="#fff"/>
<path d="M187 477.5 L196 476.2 L198 477.5 L210 477.5 L210 486 L187 486Z" fill="#f0dc98"/><rect x="189" y="479.5" width="20" height="7" fill="#f8ecc0"/><circle cx="192" cy="478.6" r=".9" fill="#d84838"/><circle cx="198" cy="478.8" r=".9" fill="#48a848"/><circle cx="204" cy="479" r=".9" fill="#3878d8"/>
<rect x="233" y="476" width="21.5" height="10" fill="#5a3a28"/><path d="M233 476 L244 486 L233 486Z" fill="#d86838"/><path d="M254.500 476 L244 486 L254.500 486 Z" fill="#8a9a38"/><path d="M237 476 L244 484 L251 476Z" fill="#f0c848"/>
<circle cx="288" cy="488" r="11.5" fill="#3a8ae0"/><path d="M278 482 C284 476 293 475.500 298 480" stroke="#f4d060" stroke-width="2.2" fill="none"/><ellipse cx="285" cy="482" rx="4" ry="2" fill="#bfe0fa"/>
<rect x="329" y="478" width="11" height="8" fill="#4a4a4a"/><circle cx="340" cy="480" r="5" fill="#e8e8e8" stroke="#888" stroke-width="1"/><path d="M340 480 L340 476.800 M340 480 L342.500 481" stroke="#444" stroke-width=".8"/>
<ellipse cx="379" cy="483" rx="8.4" ry="8.600" fill="#141414"/><ellipse cx="376.300" cy="479.600" rx="1.700" ry="2.300" fill="#fff"/><ellipse cx="381.700" cy="479.600" rx="1.700" ry="2.300" fill="#fff"/><ellipse cx="379" cy="483.600" rx="3.400" ry="1.300" fill="#f0a818"/><path d="M371 485 C376 487.500 382 487.500 387 485 L387 486 L371 486Z" fill="#d82828"/>
<rect x="412.700" y="474.400" width="22.300" height="14" rx="3" fill="#2a9cf0"/><path d="M417 486 C416 481 420 478.500 423.500 480 C425 477 431 478 431 482.500 C431 484.500 430 485.500 428.500 486" stroke="#fff" stroke-width="1.300" fill="none"/>
<circle cx="468.500" cy="486.400" r="10.900" fill="#2878e0"/><circle cx="468.500" cy="486.400" r="9" fill="none" stroke="#9cc8f8" stroke-width="1"/><path d="M465 480.500 L465.600 487 M472.800 480 L467.600 485.600 L473 487" stroke="#fff" stroke-width="2.300" fill="none" stroke-linecap="round"/>
<rect x="503" y="475" width="21.300" height="13" rx="2" fill="#f4f8f4" stroke="#5a9a5a" stroke-width="1"/><path d="M507.200 481 L514.800 489 M514.800 481 L507.200 489" stroke="#2a8a2a" stroke-width="2.500"/><path d="M517.500 481.700 L522 481.700 M517.500 484.700 L522 484.700" stroke="#4aa04a" stroke-width="1.500"/>
<path d="M547.500 475 L571 475 L571 486.500 L547.500 486.500Z" fill="#2a8a5a"/><circle cx="559.200" cy="487" r="12.600" fill="#fafcfa"/><path d="M552 486.500 L552 482 L559.200 476.600 L566.400 482.400 L566.400 486.500Z" fill="#2a8a5a"/><path d="M556 486.500 L556 483 L559.200 480.600 L562.400 483.200 L562.400 486.500Z" fill="#cfe6d8"/>
<path d="M696 481.500 L706.500 481.500 L706.500 487 L696 487Z" fill="#a8aebc" stroke="#8e96a8" stroke-width=".8"/><path d="M698.500 479.600 L701 481.500 L703.500 479.600" stroke="#98a0b0" stroke-width=".8" fill="none"/>
<circle cx="717.4" cy="484.2" r="5.2" fill="#1a2a9a"/><circle cx="717.4" cy="484.2" r="5.2" fill="none" stroke="#dfe6f4" stroke-width=".9"/><text x="717.4" y="487.4" font-family="Liberation Sans,sans-serif" font-weight="bold" font-size="8" fill="#fff" text-anchor="middle">?</text>
<path d="M731 481 L736.500 478.500" stroke="#e8eef6" stroke-width="2.200" stroke-linecap="round"/>
<path d="M743.500 486 L746 483.500 L748.500 486Z" fill="#fff"/>
<rect x="758" y="480.600" width="12" height="6" rx="2" fill="#4a9ae0"/><rect x="760.500" y="482" width="7" height="4" fill="#f0d040"/>
<rect x="776.500" y="480" width="11.500" height="6" rx="1.500" fill="#2aa83a"/><rect x="779" y="482.800" width="6.500" height="1.500" fill="#fff"/>
<rect x="793.500" y="480.500" width="9.500" height="6" rx="2" fill="#c8ccd0" stroke="#777" stroke-width=".8"/>
<path d="M814 486 L819 482 L819 486 Z" fill="#e8ecf0"/><path d="M827 486 L831.500 481.500 L831.500 486 Z" fill="#f4f4f4"/><path d="M834 486 C835.500 483.500 837 482.500 838.500 482" stroke="#f4f4f4" stroke-width="1.200" fill="none"/>
<rect x="845.600" y="480" width="11.400" height="7" rx="1.500" fill="#f06a10"/><rect x="850.500" y="481.500" width="1.700" height="5" fill="#fff"/>
<rect x="914.500" y="472" width="1" height="14" fill="#5a6a8a"/><rect x="915.500" y="472" width="1" height="14" fill="#b8c6dc"/>
</svg>
<span style="left:880px;top:3.9px;font-size:9px;line-height:10px;color:#fff">18:33</span>
<div style="left:919px;top:.8px;width:11px;height:15px;background:linear-gradient(90deg,#5a6b8c,#94a4c2 45%,#66769a)"></div>
</div>
<div id="dlg"><div class="tbar"></div>
<span class="lbl" style="left:4.2px;top:2.7px;font-size:8.6px;letter-spacing:0">模板设置</span>
<div style="left:193.6px;top:2.6px;width:23px;height:11.2px;border-radius:2.5px;border:1px solid #6a3a30;box-shadow:0 0 0 .7px #dfe6f0;background:linear-gradient(#f2c0aa 0,#e89474 45%,#d6562e 52%,#e27e56 100%)"><svg width="8" height="7" viewBox="0 0 8 7" style="left:6.500px;top:1px"><path d="M1.200 1 L6.800 6 M6.800 1 L1.200 6" stroke="#7a5a58" stroke-width="2.6" stroke-linecap="round"/><path d="M1.200 1 L6.800 6 M6.800 1 L1.200 6" stroke="#fff" stroke-width="1.500" stroke-linecap="round"/></svg></div>
<div class="client"><div style="left:0;top:1.1px;width:100%;height:100%">
 <span class="lbl" style="left:7px;top:5px">名称:</span>
 <span class="lbl" style="left:7px;top:28px">边距:</span>
 <span class="lbl" style="left:7px;top:48px">偏移:</span>
 <span class="lbl" style="left:118px;top:5px">数量:</span>
 <span class="lbl" style="left:118px;top:28px">端延:</span>
 <span class="lbl" style="left:118px;top:48px">宽度:</span>
 <div class="inp" style="left:143px;top:5.500px">2</div>
 <div class="inp" style="left:143px;top:25.500px">0.3</div>
 <div class="inp" style="left:143px;top:45.500px">0.2</div>
 <div class="inp" style="left:34.500px;top:5px;width:75.500px;letter-spacing:0"><span style="left:1px;top:1px;height:10px;background:#3399ff;color:#fff;font-size:8.500px;line-height:10px;padding:0 1px">袋盖</span>
   <div style="right:0;top:0;width:11px;height:12px;background:#f0f0f0;border:1px solid #ccc"><div style="left:2px;top:4px;border:2.500px solid transparent;border-top:3px solid #000;width:0;height:0"></div></div></div>
 <div style="left:6.500px;top:66px;width:155px;height:22px;border:1px solid #bbb;border-radius:2px"></div>
 <div style="left:15.500px;top:72px;width:7px;height:7px;border-radius:50%;border:1px solid #666;background:#fff"><div style="left:1.500px;top:1.500px;width:2px;height:2px;border-radius:50%;background:#000"></div></div>
 <span class="lbl" style="left:27.5px;top:70.500px">弧线</span>
 <span class="lbl" style="left:104px;top:70.500px">线封口</span>
 <div class="cb" style="left:6.3px;top:95px"><svg width="6" height="5.6" viewBox="0 0 6 5.6" style="left:0;top:0"><path d="M1 2.6 L2.6 4.4 L5.2 .8" stroke="#000" stroke-width="1.25" fill="none"/></svg></div>
 <span class="lbl" style="left:19.500px;top:93.500px">添加裁片轮廓线</span>
 <div class="cb" style="left:119.5px;top:94px"><svg width="6" height="5.6" viewBox="0 0 6 5.6" style="left:0;top:0"><path d="M1 2.6 L2.6 4.4 L5.2 .8" stroke="#000" stroke-width="1.25" fill="none"/></svg></div>
 <span class="lbl" style="left:132.500px;top:93px">内部线开槽</span>
 <div class="btn" style="left:35px;top:112.5px">确定</div>
 <div class="btn" style="left:119px;top:112.5px">取消</div>
 <div id="list" style="left:34.500px;top:18.3px;width:76.500px;height:69.4px;background:#fff;border:1px solid #3a3a3a;overflow:hidden">

<div class="li" style="top:-0.40px;background:#3399ff;color:#fff;height:9.2px;width:63px;">袋盖</div>
<div class="li" style="top:8.15px;">后侧</div>
<div class="li" style="top:16.70px;">后侧破缝面*1</div>
<div class="li" style="top:25.25px;">后片</div>
<div class="li" style="top:33.80px;">后片*1</div>
<div class="li" style="top:42.35px;">后片1</div>
<div class="li" style="top:50.90px;">后片11</div>
<div class="li" style="top:59.45px;">后片2</div>
<div style="right:0;top:0;width:12.4px;height:68px;background:#f2f2f4;border-left:1px solid #ddd">
<div style="left:3.2px;top:1.5px;border:2.2px solid transparent;border-bottom:2.6px solid #333;border-top:none;width:0;height:0"></div>
<div style="left:0;top:12.5px;width:11.4px;height:9px;background:linear-gradient(90deg,#e4e4ea,#cfcfd8);border:1px solid #a8a8b0;border-radius:1px"></div>
<div style="left:3.2px;bottom:2px;border:2.2px solid transparent;border-top:2.6px solid #333;border-bottom:none;width:0;height:0"></div>
</div>
 </div>
</div></div>
</div>

<svg width="10.4" height="14.8" viewBox="0 0 14 20" style="left:454.3px;top:199.3px"><path d="M1 1 L1 15 L4.200 12 L6.600 17.500 L9 16.400 L6.600 11.200 L11 11.200 Z" fill="#fff" stroke="#000" stroke-width="1.35" stroke-linejoin="round"/></svg>
</div></body></html>
